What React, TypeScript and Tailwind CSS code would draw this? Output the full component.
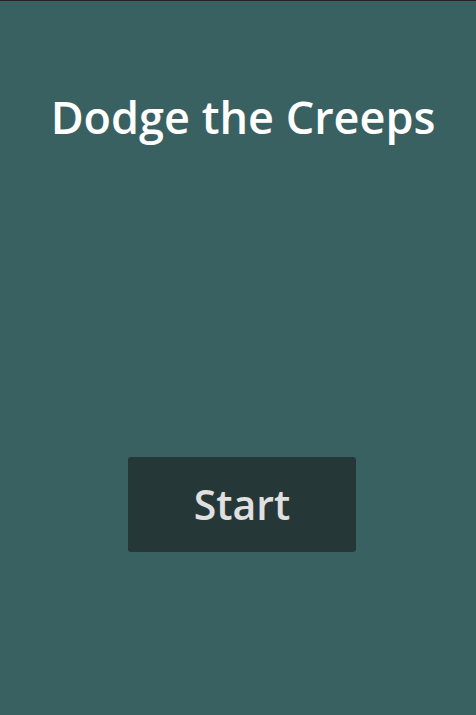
export default function App() {
  return (
    <main
      className="h-[715px] w-[476px] bg-[#3a6162] border-t border-[#232323] flex flex-col items-center"
      style={{ fontFamily: '"Open Sans", "Noto Sans", sans-serif' }}
    >
      <h1 className="mt-[84px] ml-[10px] text-[45px] leading-[64px] font-semibold text-white">
        Dodge the Creeps
      </h1>
      <button className="mt-[308px] ml-[8px] w-[228px] h-[95px] rounded-[3px] bg-[#263738] text-[#e0e0e0] text-[41px] font-semibold flex items-center justify-center">
        Start
      </button>
    </main>
  );
}
